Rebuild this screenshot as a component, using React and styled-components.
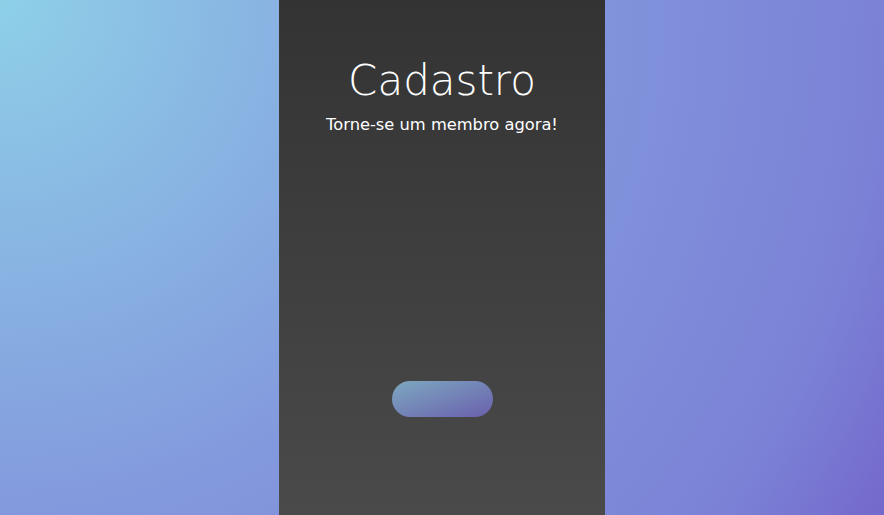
import React from "react";
import styled, { createGlobalStyle } from "styled-components";

const GlobalStyle = createGlobalStyle`
  html, body {
    margin: 0;
    height: 100%;
  }
  #root {
    height: 100%;
  }
`;

const Page = styled.div`
  height: 100vh;
  display: flex;
  justify-content: center;
  background: radial-gradient(
    circle at top left,
    #8ed0e8 0px,
    #8399dd 515px,
    #7b82d6 884px,
    #7468cc 1023px
  );
  font-family: "DejaVu Sans", sans-serif;
`;

const Panel = styled.div`
  width: 326px;
  height: 100%;
  display: flex;
  flex-direction: column;
  align-items: center;
  background: linear-gradient(to bottom, #333333, #4a4a4a);
  color: #ffffff;
`;

const Title = styled.h1`
  margin: 55px 0 0;
  font-size: 42px;
  font-weight: 200;
  line-height: 52px;
`;

const Subtitle = styled.p`
  margin: 8px 0 0;
  font-size: 16.3px;
  font-weight: 400;
`;

const Button = styled.button`
  margin-top: 247px;
  width: 101px;
  height: 36px;
  border: none;
  border-radius: 18px;
  background: linear-gradient(to bottom right, #7da8c0, #6a60ad);
  cursor: pointer;
`;

const App = () => {
  return (
    <Page>
      <GlobalStyle />
      <Panel>
        <Title>Cadastro</Title>
        <Subtitle>Torne-se um membro agora!</Subtitle>
        <Button />
      </Panel>
    </Page>
  );
};

export default App;
